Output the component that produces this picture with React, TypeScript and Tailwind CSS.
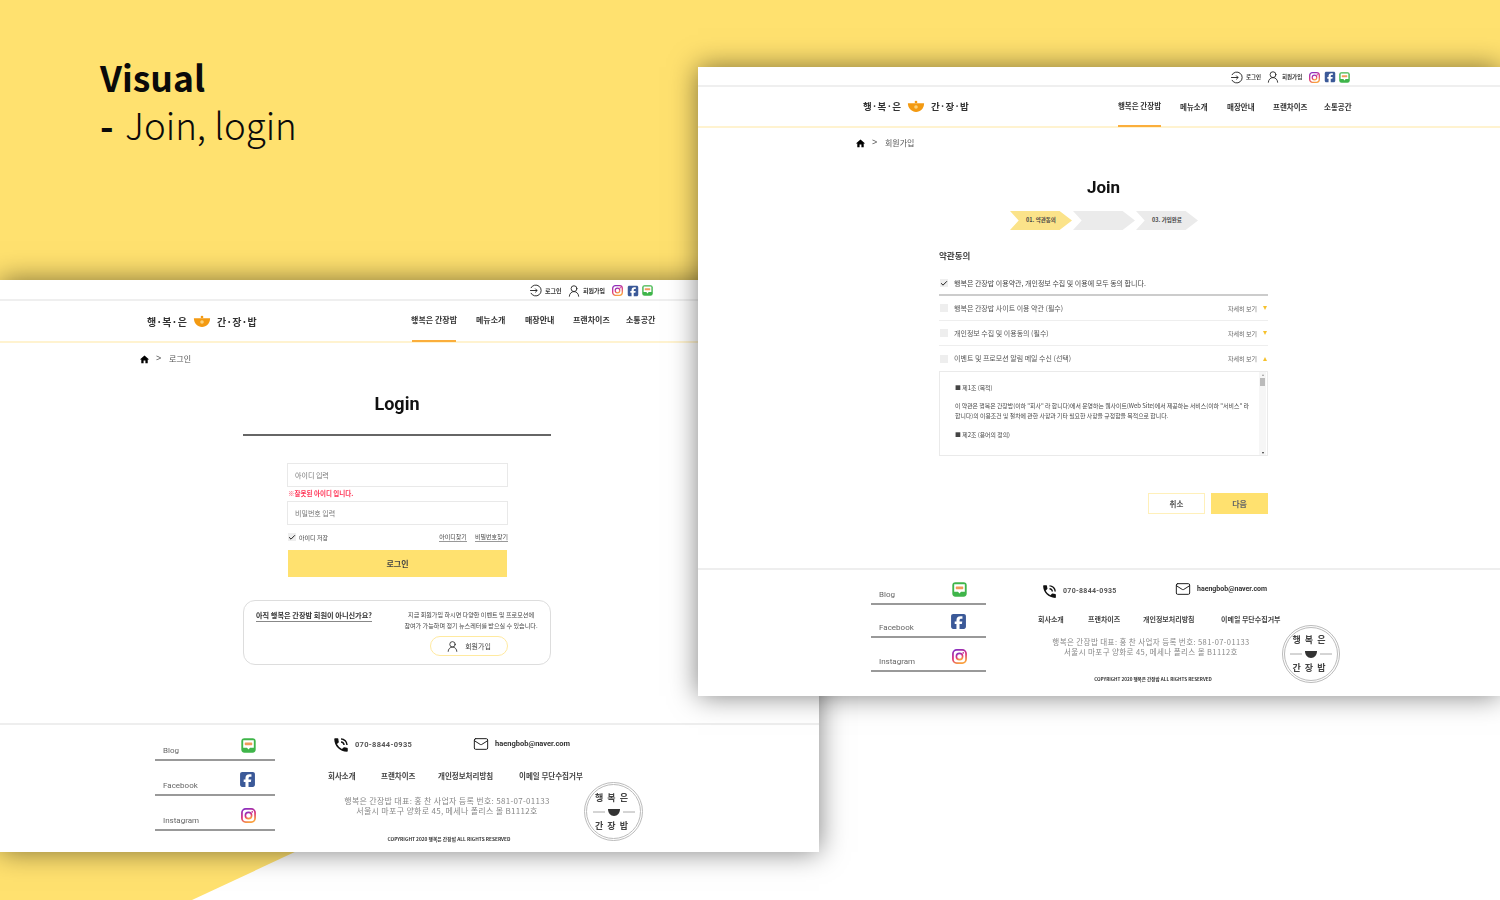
import { Check, Mail, UserRound } from "lucide-react";
import { FaSquareFacebook } from "react-icons/fa6";
import { MdHome, MdPhoneInTalk } from "react-icons/md";

const KR = "font-['Noto_Sans_CJK_KR','Noto_Sans',sans-serif]";

function LoginIcon({ className }: { className: string }) {
  return (
    <svg viewBox="0 0 24 24" fill="none" stroke="#222" strokeWidth="1.7" className={className}>
      <path d="M3.5 7.5a10 10 0 1 1 0 9" />
      <path d="M2 12h13M11.5 8.5 15 12l-3.500 3.500" />
    </svg>
  );
}

function InstaIcon({ id, className }: { id: string; className: string }) {
  return (
    <svg viewBox="0 0 24 24" fill="none" className={className}>
      <defs>
        <linearGradient id={id} x1="0.2" y1="0" x2="0.6" y2="1">
          <stop offset="0" stopColor="#8a2fc0" />
          <stop offset="0.5" stopColor="#d9307f" />
          <stop offset="1" stopColor="#f9a03f" />
        </linearGradient>
      </defs>
      <rect x="1.500" y="1.500" width="21" height="21" rx="6" stroke={`url(#${id})`} strokeWidth="2.800" />
      <circle cx="12" cy="12" r="5" stroke={`url(#${id})`} strokeWidth="2.600" />
      <circle cx="18" cy="6" r="1.400" fill="#c9358f" />
    </svg>
  );
}

function BlogIcon({ className }: { className: string }) {
  return (
    <svg viewBox="0 0 24 24" className={className}>
      <rect x="0.500" y="0.500" width="23" height="23" rx="5" fill="#3fb54a" />
      <path d="M3.500 3.500h17v12h-6l-2.500 3-2.500-3h-6z" fill="#fff" />
      <rect x="6" y="7" width="12" height="4.500" rx="1" fill="#ef9a5a" />
    </svg>
  );
}

function Logo({ className }: { className: string }) {
  return (
    <div className={`flex items-center text-[#333] font-bold ${KR} ${className}`}>
      <span className="tracking-[0.1px] whitespace-nowrap">행·복·은</span>
      <svg viewBox="0 0 20 14" className="w-[18px] h-[13px] mx-[6px] shrink-0">
        <circle cx="10" cy="2" r="1.500" fill="#f39a12" />
        <path d="M1 3.500h18c0 5.500-4 9.500-9 9.500S1 9 1 3.500z" fill="#f39a12" />
        <circle cx="10" cy="7.500" r="2" fill="#fbd27d" />
      </svg>
      <span className="tracking-[0.1px] whitespace-nowrap">간·장·밥</span>
    </div>
  );
}

function Stamp({ className }: { className: string }) {
  return (
    <div className={`flex flex-col items-center justify-center shrink-0 rounded-full border-[3px] border-double border-[#bbb] text-[#444] font-bold text-[9px] leading-[12px] tracking-[4px] ${KR} ${className}`}>
      <span>행복은</span>
      <svg viewBox="0 0 44 10" className="w-[44px] h-[10px] my-[3px]">
        <path d="M1 5h12M31 5h12" stroke="#aaa" strokeWidth="1" />
        <path d="M16 2h12c0 4-2.500 7-6 7s-6-3-6-7z" fill="#333" />
      </svg>
      <span>간장밥</span>
    </div>
  );
}

function TopLinks({ className, loginW, joinW }: { className: string; loginW: string; joinW: string }) {
  return (
    <div className={`flex items-center justify-end border-b-2 border-[#efefef] pt-[2px] text-[#333] font-bold whitespace-nowrap ${KR} ${className}`}>
      <LoginIcon className="w-[13px] h-[13px]" />
      <span className={`ml-[3px] ${loginW}`}>로그인</span>
      <UserRound size={14} strokeWidth={1.500} color="#222" className="ml-[4px]" />
      <span className={`ml-[2px] ${joinW}`}>회원가입</span>
      <InstaIcon id="insta-top" className="ml-[5px] w-[11px] h-[11px]" />
      <FaSquareFacebook size={12} color="#3b5998" className="ml-[4px]" />
      <BlogIcon className="ml-[3px] w-[11px] h-[11px]" />
    </div>
  );
}

function Crumb({ label, className }: { label: string; className: string }) {
  return (
    <div className={`flex items-center h-[14px] text-[8px] text-[#555] ${KR} ${className}`}>
      <MdHome size={11} color="#000" />
      <span className="ml-[6px] w-[13px] text-[9px] font-['Liberation_Sans',sans-serif]">&gt;</span>
      <span>{label}</span>
    </div>
  );
}

function SocialRow({
  label,
  icon,
  className,
}: {
  label: string;
  icon: React.ReactNode;
  className: string;
}) {
  return (
    <div className={`flex items-end justify-between border-b-2 border-[#999] pb-[2px] pl-[8px] pr-[19px] ${className}`}>
      <span className="text-[8px] leading-[12px] text-[#666] font-['Roboto',sans-serif]">{label}</span>
      <span className="flex mb-[4px]">{icon}</span>
    </div>
  );
}

function LoginWindow() {
  return (
    <section className={`absolute left-0 top-[280px] w-[819px] h-[572px] bg-white shadow-[0_0_26px_rgba(0,0,0,0.5)] blur-[0.45px] ${KR}`}>
      <TopLinks className="h-[21px] pr-[166px] text-[6px]" loginW="w-[18px]" joinW="w-[24px]" />

      <header className="flex items-stretch h-[42px] border-b-2 border-[#fff3d0]">
        <Logo className="ml-[147px] w-[225px] text-[10px]" />
        <nav className="flex ml-[40px] text-[8px] text-[#333] font-bold">
          <a className="flex items-center justify-center w-[44px] pb-[2px] border-b-2 border-[#fbae3c] -mb-[1px] mr-[20px] whitespace-nowrap">행복은 간장밥</a>
          <a className="flex items-center w-[49px] pb-[2px]">메뉴소개</a>
          <a className="flex items-center w-[48px] pb-[2px]">매장안내</a>
          <a className="flex items-center w-[53px] pb-[2px]">프랜차이즈</a>
          <a className="flex items-center pb-[2px]">소통공간</a>
        </nav>
      </header>

      <Crumb label="로그인" className="mt-[9px] ml-[139px]" />

      <h2 className="mt-[26px] w-[794px] h-[24px] text-center text-[18px] leading-[24px] font-bold text-[#111] font-['Roboto',sans-serif]">Login</h2>
      <div className="mt-[18px] ml-[243px] w-[308px] h-[2px] bg-[#666]" />

      <div className="mt-[27px] ml-[287px] w-[221px] h-[24px] flex items-center pl-[7px] border border-[#e9e9e9] text-[7px] text-[#777]">아이디 입력</div>
      <p className="ml-[288px] h-[14px] flex items-center text-[6.500px] font-bold text-[#ff3355]">※잘못된 아이디 입니다.</p>
      <div className="ml-[287px] w-[221px] h-[24px] flex items-center pl-[7px] border border-[#e9e9e9] text-[7px] text-[#777]">비밀번호 입력</div>

      <div className="mt-[6px] ml-[288px] w-[220px] h-[12px] flex items-center text-[6px] text-[#444]">
        <span className="flex items-center justify-center w-[8px] h-[8px] bg-[#eee]">
          <Check size={9} strokeWidth={3} color="#222" />
        </span>
        <span className="ml-[3px]">아이디 저장</span>
        <a className="ml-auto border-b border-[#999] leading-[8px]">아이디찾기</a>
        <a className="ml-[8px] border-b border-[#999] leading-[8px]">비밀번호찾기</a>
      </div>

      <button className="block mt-[7px] ml-[288px] w-[219px] h-[27px] bg-[#ffe16f] text-[8px] font-bold text-[#444]">로그인</button>

      <div className="flex mt-[23px] ml-[243px] w-[308px] h-[65px] border-[1.500px] border-[#ddd] rounded-[12px] pl-[12px]">
        <p className="mt-[9px] h-[12px] leading-[11px] text-[7.200px] font-bold text-[#333] border-b border-[#888] whitespace-nowrap">아직 행복은 간장밥 회원이 아니신가요?</p>
        <div className="flex flex-col items-center ml-[28px] w-[142px]">
          <p className="mt-[8px] text-[6.100px] leading-[11px] text-[#444] text-center whitespace-nowrap">
            지금 회원가입 하시면 다양한 이벤트 및 프로모션에
            <br />
            참여가 가능하며 정기 뉴스레터를 받으실 수 있습니다.
          </p>
          <button className="flex items-center justify-center mt-[5px] mr-[5px] w-[78px] h-[20px] border-[1.500px] border-[#ffeaa0] rounded-full text-[7px] text-[#444]">
            <UserRound size={13} strokeWidth={1.500} color="#222" />
            <span className="ml-[6px]">회원가입</span>
          </button>
        </div>
      </div>

      <footer className="flex mt-[58px] h-[129px] border-t-2 border-[#eee]">
        <div className="ml-[155px] w-[120px]">
          <SocialRow className="h-[36px]" label="Blog" icon={<BlogIcon className="w-[15px] h-[15px]" />} />
          <SocialRow className="h-[35px]" label="Facebook" icon={<FaSquareFacebook size={17} color="#3b5998" />} />
          <SocialRow className="h-[35px]" label="Instagram" icon={<InstaIcon id="insta-login" className="w-[15px] h-[15px]" />} />
        </div>

        <div className="ml-[53px] w-[320px]">
          <div className="flex items-center mt-[12px] h-[16px] text-[7.500px] font-bold text-[#333]">
            <MdPhoneInTalk size={18} color="#111" className="ml-[4px]" />
            <span className="ml-[5px] w-[118px] text-[#555] font-['Roboto',sans-serif] tracking-[0.3px]">070-8844-0935</span>
            <Mail size={16} strokeWidth={1.500} color="#222" className="-mt-[2px]" />
            <span className="ml-[6px] -mt-[2px] font-['Roboto',sans-serif]">haengbob@naver.com</span>
          </div>
          <div className="flex mt-[17px] h-[12px] items-center text-[7.500px] font-bold text-[#444]">
            <a className="w-[53px]">회사소개</a>
            <a className="w-[57px]">프랜차이즈</a>
            <a className="w-[81px]">개인정보처리방침</a>
            <a>이메일 무단수집거부</a>
          </div>
          <div className="flex">
            <div className="w-[238px] pt-[14px] text-center whitespace-nowrap">
              <p className="text-[8px] leading-[10px] text-[#888] tracking-[0.3px]">
                행복은 간장밥 대표: 홍 찬 사업자 등록 번호: 581-07-01133
                <br />
                서울시 마포구 양화로 45, 메세나 폴리스 몰 B1112호
              </p>
              <p className="mt-[18px] ml-[4px] text-[4.800px] leading-[10px] font-bold text-[#333]">COPYRIGHT 2020 행복은 간장밥 ALL RIGHTS RESERVED</p>
            </div>
            <Stamp className="ml-[18px] w-[59px] h-[59px]" />
          </div>
        </div>
      </footer>
    </section>
  );
}

function AgreeRow({ label, open, border }: { label: string; open?: boolean; border?: boolean }) {
  return (
    <div className={`flex items-center h-[25px] pl-[1px] pr-[1px] text-[7px] text-[#555] ${border ? "border-b border-[#eee]" : ""}`}>
      <span className="w-[8px] h-[8px] bg-[#eee]" />
      <span className="ml-[6px]">{label}</span>
      <span className="ml-auto text-[6px] text-[#666]">자세히 보기</span>
      <span className={`ml-[6px] w-0 h-0 border-x-[2.500px] border-x-transparent ${open ? "border-b-[4px] border-b-[#f6c12c]" : "border-t-[4px] border-t-[#f6c12c]"}`} />
    </div>
  );
}

function Step({ label, className }: { label?: string; className: string }) {
  return (
    <div className={`flex items-center justify-center w-[62px] h-[19px] text-[5.500px] font-bold text-[#444] [clip-path:polygon(0_0,80%_0,100%_50%,80%_100%,0_100%,14%_50%)] ${className}`}>
      {label}
    </div>
  );
}

function JoinWindow() {
  return (
    <section className={`absolute left-[698px] top-[67px] w-[802px] h-[629px] bg-white shadow-[0_0_26px_rgba(0,0,0,0.5)] blur-[0.45px] ${KR}`}>
      <TopLinks className="h-[20px] pr-[150px] text-[5.500px]" loginW="w-[16px]" joinW="w-[22px]" />

      <header className="flex items-stretch h-[41px] border-b-2 border-[#fff3d0]">
        <Logo className="ml-[165px] w-[215px] text-[9.500px]" />
        <nav className="flex ml-[40px] text-[7.500px] text-[#333] font-bold">
          <a className="flex items-center justify-center w-[43px] border-b-2 border-[#fbae3c] -mb-[1px] mr-[19px] whitespace-nowrap">행복은 간장밥</a>
          <a className="flex items-center w-[47px]">메뉴소개</a>
          <a className="flex items-center w-[46px]">매장안내</a>
          <a className="flex items-center w-[51px]">프랜차이즈</a>
          <a className="flex items-center">소통공간</a>
        </nav>
      </header>

      <Crumb label="회원가입" className="mt-[8px] ml-[157px]" />

      <h2 className="mt-[25px] w-[811px] h-[24px] text-center text-[17px] leading-[24px] font-bold text-[#111] font-['Roboto',sans-serif]">Join</h2>

      <div className="flex mt-[12px] ml-[312px] gap-[1px]">
        <Step label="01. 약관동의" className="bg-[#fbe38a]" />
        <Step className="bg-[#ebebeb]" />
        <Step label="03. 가입완료" className="bg-[#ebebeb]" />
      </div>

      <div className="ml-[241px] w-[329px]">
        <h3 className="mt-[19px] h-[12px] leading-[12px] text-[8.500px] font-bold text-[#444]">약관동의</h3>
        <div className="flex items-center mt-[16px] h-[12px] pl-[1px] text-[7px] text-[#444]">
          <span className="flex items-center justify-center w-[8px] h-[8px] bg-[#eee]">
            <Check size={9} strokeWidth={3} color="#222" />
          </span>
          <span className="ml-[6px]">행복은 간장밥 이용약관, 개인정보 수집 및 이용에 모두 동의 합니다.</span>
        </div>
        <div className="mt-[5px] h-[2px] bg-[#ccc]" />
        <AgreeRow label="행복은 간장밥 사이트 이용 약관 (필수)" border />
        <AgreeRow label="개인정보 수집 및 이용동의 (필수)" border />
        <AgreeRow label="이벤트 및 프로모션 알림 메일 수신 (선택)" open />

        <div className="flex h-[85px] border-[1.500px] border-[#eaeaea] text-[5.900px] text-[#444]">
          <div className="flex-1 pl-[15px] pr-[8px] pt-[11px] whitespace-nowrap leading-[10px]">
            <p>■ 제1조 (목적)</p>
            <p className="mt-[8px]">
              이 약관은 행복은 간장밥(이하 "회사" 라 합니다)에서 운영하는 웹사이트(Web Site)에서 제공하는 서비스(이하 "서비스" 라
              <br />
              합니다)의 이용조건 및 절차에 관한 사항과 기타 필요한 사항을 규정함을 목적으로 합니다.
            </p>
            <p className="mt-[9px]">■ 제2조 (용어의 정의)</p>
          </div>
          <div className="flex flex-col items-center w-[7px] mr-[1px] pt-[2px] pb-[1px] bg-[#f6f6f6]">
            <span className="w-0 h-0 border-x-[1.500px] border-x-transparent border-b-[2px] border-b-[#999]" />
            <span className="mt-[2px] w-[5px] h-[8px] bg-[#bbb]" />
            <span className="mt-auto w-0 h-0 border-x-[1.500px] border-x-transparent border-t-[2px] border-t-[#333]" />
          </div>
        </div>

        <div className="flex justify-end gap-[6px] mt-[37px]">
          <button className="w-[57px] h-[21px] border-[1.500px] border-[#fff0ba] text-[7.500px] font-bold text-[#555]">취소</button>
          <button className="w-[57px] h-[21px] bg-[#ffe16f] text-[8px] font-bold text-[#666]">다음</button>
        </div>
      </div>

      <footer className="flex mt-[54px] h-[128px] border-t-2 border-[#eee]">
        <div className="ml-[173px] w-[115px]">
          <SocialRow className="h-[35px]" label="Blog" icon={<BlogIcon className="w-[15px] h-[15px]" />} />
          <SocialRow className="h-[33px]" label="Facebook" icon={<FaSquareFacebook size={17} color="#3b5998" />} />
          <SocialRow className="h-[34px]" label="Instagram" icon={<InstaIcon id="insta-join" className="w-[15px] h-[15px]" />} />
        </div>

        <div className="ml-[52px] w-[310px]">
          <div className="flex items-center mt-[13px] h-[16px] text-[7px] font-bold text-[#333]">
            <MdPhoneInTalk size={17} color="#111" className="ml-[3px]" />
            <span className="ml-[5px] w-[112px] text-[#555] font-['Roboto',sans-serif] tracking-[0.3px]">070-8844-0935</span>
            <Mail size={16} strokeWidth={1.500} color="#222" className="-mt-[4px]" />
            <span className="ml-[6px] -mt-[4px] font-['Roboto',sans-serif]">haengbob@naver.com</span>
          </div>
          <div className="flex mt-[14px] h-[12px] items-center text-[7px] font-bold text-[#444]">
            <a className="w-[50px]">회사소개</a>
            <a className="w-[55px]">프랜차이즈</a>
            <a className="w-[78px]">개인정보처리방침</a>
            <a>이메일 무단수집거부</a>
          </div>
          <div className="flex">
            <div className="w-[226px] pt-[12px] text-center whitespace-nowrap">
              <p className="text-[7.500px] leading-[10px] text-[#888] tracking-[0.4px]">
                행복은 간장밥 대표: 홍 찬 사업자 등록 번호: 581-07-01133
                <br />
                서울시 마포구 양화로 45, 메세나 폴리스 몰 B1112호
              </p>
              <p className="mt-[17px] ml-[4px] text-[4.600px] leading-[10px] font-bold text-[#333]">COPYRIGHT 2020 행복은 간장밥 ALL RIGHTS RESERVED</p>
            </div>
            <Stamp className="ml-[18px] w-[58px] h-[58px]" />
          </div>
        </div>
      </footer>
    </section>
  );
}

export default function App() {
  return (
    <div className="relative w-[1500px] h-[900px] overflow-hidden bg-white">
      {/* yellow backdrop with the diagonal cut */}
      <div className="absolute inset-0 bg-[#ffe16f] [clip-path:polygon(0_0,100%_0,100%_290px,192px_100%,0_100%)]" />

      <div className={`relative pl-[100px] pt-[53px] text-[#0a0a0a] ${KR}`}>
        <h1 className="h-[47px] text-[35.500px] leading-[48px] font-bold">Visual</h1>
        <p className="h-[48px] flex text-[36.700px] leading-[48px] font-light">
          <span className="w-[25px] font-bold">-</span>
          <span>Join, login</span>
        </p>
      </div>

      <LoginWindow />
      <JoinWindow />
    </div>
  );
}
